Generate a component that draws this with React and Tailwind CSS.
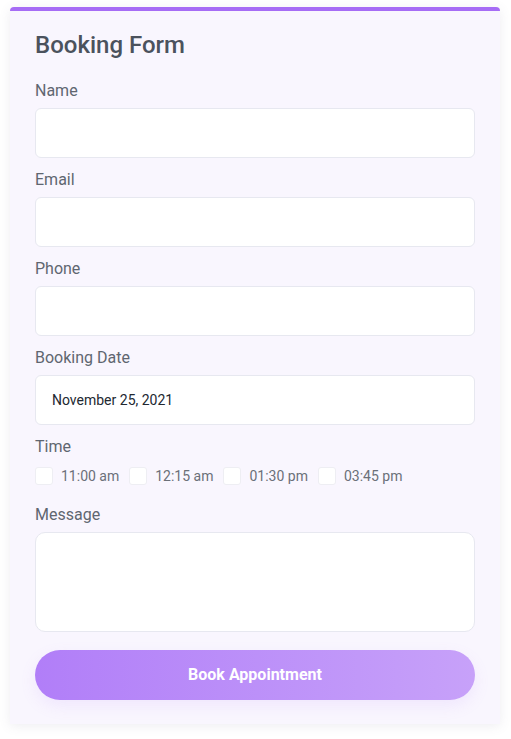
import React from 'react'

const Field = ({ label, children }) => (
  <div className='pb-[9px]'>
    <label className='block text-[16px] leading-6 text-[#5f6670] pt-[1px] pb-[5px]'>{label}</label>
    {children}
  </div>
)

const inputCls = 'block w-full h-[50px] rounded-[6px] bg-white border border-[#e7e8f0] px-4 text-[14px] text-[#222831] outline-none'

const times = ['11:00 am', '12:15 am', '01:30 pm', '03:45 pm']

const App = () => {
  return (
    <div className='min-h-screen bg-white pt-[7px] pl-[10px]' style={{ fontFamily: 'Roboto, "Liberation Sans", sans-serif' }}>
      <div className='w-[490px] rounded-t-[4px] border-t-4 border-[#a66cf5] bg-[#f9f6fe] px-[25px] pt-[20px] pb-[24px] shadow-[0_2px_12px_rgba(90,80,120,0.10)]'>
        <h1 className='text-[24px] font-medium text-[#4b525d] pb-[19px] leading-[28px]'>Booking Form</h1>

        <Field label='Name'>
          <input className={inputCls} />
        </Field>
        <Field label='Email'>
          <input className={inputCls} />
        </Field>
        <Field label='Phone'>
          <input className={inputCls} />
        </Field>
        <Field label='Booking Date'>
          <input className={inputCls} defaultValue='November 25, 2021' />
        </Field>

        <div className='pb-[17px]'>
          <label className='block text-[16px] leading-6 text-[#5f6670] pt-[1px]'>Time</label>
          <div className='flex items-center pt-[8px]'>
            {times.map((t) => (
              <div key={t} className='flex items-center mr-[10px]'>
                <span className='w-[18px] h-[18px] rounded-[3px] bg-white border border-[#eeeef3]' />
                <span className='ml-[8px] text-[14px] leading-[18px] text-[#6b7079]'>{t}</span>
              </div>
            ))}
          </div>
        </div>

        <div className='pb-[18px]'>
          <label className='block text-[16px] leading-6 text-[#5f6670] pt-[1px] pb-[5px]'>Message</label>
          <textarea className='block w-full h-[100px] rounded-[10px] bg-white border border-[#e7e8f0] resize-none outline-none' />
        </div>

        <button className='w-full h-[50px] rounded-full bg-gradient-to-r from-[#b17ef8] to-[#c7a1f9] text-white font-bold text-[16px] shadow-[0_6px_16px_rgba(176,126,248,0.12)]'>
          Book Appointment
        </button>
      </div>
    </div>
  )
}

export default App
